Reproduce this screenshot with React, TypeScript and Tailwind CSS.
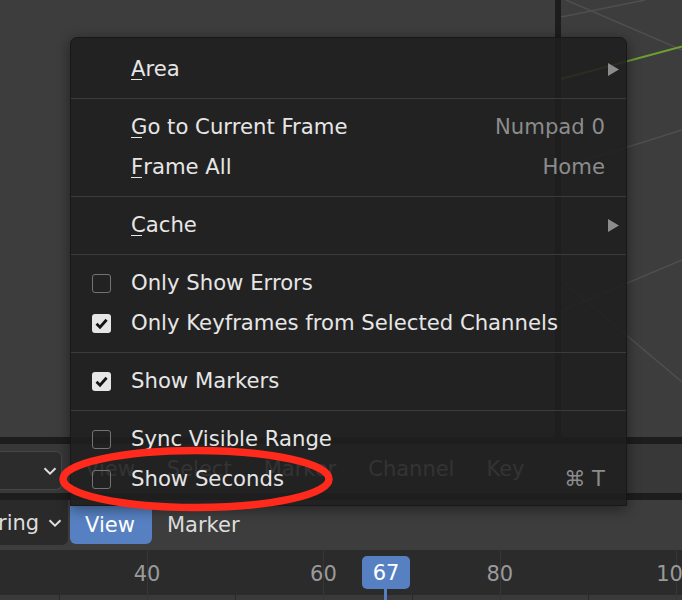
import React from 'react';

type Check = 'on' | 'off';

function Mnemonic({ first, rest }: { first: string; rest: string }) {
  return (
    <span>
      <span className="relative">
        {first}
        <span className="absolute bottom-[1px] left-0 h-px w-[11px] bg-[#e6e6e6]" />
      </span>
      {rest}
    </span>
  );
}

function Row({
  children,
  check,
  shortcut,
  submenu,
}: {
  children: React.ReactNode;
  check?: Check;
  shortcut?: string;
  submenu?: boolean;
}) {
  return (
    <div className="flex h-[40px] items-center pl-[21px] pr-[21px] pt-[2px]">
      <div className="mr-[20px] flex w-[19px] justify-center">
        {check === 'off' && (
          <div className="h-[19px] w-[19px] rounded-[3px] border-[1.5px] border-[#727272]" />
        )}
        {check === 'on' && (
          <div className="flex h-[19px] w-[19px] items-center justify-center rounded-[3px] bg-[#e6e6e6]">
            <svg width="19" height="19" viewBox="0 0 19 19">
              <path d="M4.5 9.8 L8 13.2 L14.6 5.8" fill="none" stroke="#141414" strokeWidth="2.8" />
            </svg>
          </div>
        )}
      </div>
      <span className="flex-1 text-[#e6e6e6]">{children}</span>
      {shortcut && <span className="text-[#8c8c8c]">{shortcut}</span>}
      {submenu && (
        <svg className="-mr-[14px]" width="11" height="13" viewBox="0 0 11 13">
          <polygon points="0,0 11,6.5 0,13" fill="#8c8c8c" />
        </svg>
      )}
    </div>
  );
}

function Sep() {
  return <div className="mb-[7px] mt-[10px] h-px bg-[#3b3b3b]" />;
}

function Chevron() {
  return (
    <svg width="14" height="8" viewBox="0 0 14 8">
      <path d="M1.5 1.2 L7 6.6 L12.5 1.2" fill="none" stroke="#dedede" strokeWidth="2" />
    </svg>
  );
}

const frameX = (f: number) => 147 + (f - 40) * 8.82;

function Ruler() {
  const frames = [30, 40, 50, 60, 70, 80, 90, 100];
  return (
    <div className="relative h-[50px] bg-[#2b2b2b]">
      <div className="absolute bottom-0 left-0 h-[5px] w-full bg-[#3a3a3a]" />
      {frames.map((f) =>
        f % 20 === 0 ? (
          <div key={f} className="absolute top-0 h-[50px] w-px bg-[#363636]" style={{ left: frameX(f) }} />
        ) : (
          <div key={f} className="absolute bottom-0 h-[5px] w-px bg-[#2a2a2a]" style={{ left: frameX(f) }} />
        )
      )}
      {[40, 60, 80, 100].map((f) => (
        <span
          key={f}
          className="absolute top-[11.5px] w-[60px] text-center text-[#9a9a9a]"
          style={{ left: frameX(f) - 30 }}
        >
          {f}
        </span>
      ))}
      <div className="absolute left-[362px] top-[6px] flex h-[33px] w-[48px] items-center justify-center rounded-[5px] bg-[#5680c2] text-white">
        67
      </div>
      <div className="absolute left-[384px] top-[39px] h-[11px] w-[3px] bg-[#5680c2]" />
    </div>
  );
}

export default function App() {
  return (
    <div className="relative h-[600px] w-[682px] overflow-hidden bg-[#1d1d1d] font-['DejaVu_Sans','Liberation_Sans',sans-serif] text-[21px] leading-[24px]">
      {/* upper editors */}
      <div className="flex h-[437px]">
        <div className="w-[555px] rounded-br-[4px] bg-[#3d3d3d]" />
        <div className="ml-[6px] flex-1 rounded-bl-[4px] bg-[#3d3d3d]">
          <svg width="121" height="437" viewBox="0 0 121 437">
            <g stroke="#4f4f4f" strokeWidth="1.5">
              <line x1="0" y1="17" x2="84" y2="0" />
              <line x1="5" y1="0" x2="121" y2="50" />
              <line x1="0" y1="168" x2="121" y2="130" />
              <line x1="0" y1="311" x2="121" y2="260" />
              <line x1="0" y1="280" x2="121" y2="382" />
            </g>
            <line x1="0" y1="79" x2="121" y2="46.5" stroke="#6d9f31" strokeWidth="2" />
          </svg>
        </div>
      </div>

      {/* dope sheet header */}
      <div className="mt-[7px] flex h-[49px] items-start bg-[#383838]">
        <div className="mt-[7px] flex h-[39px] w-[62px] items-center justify-end rounded-r-[6px] border border-l-0 border-[#474747] bg-[#2c2c2c] pr-[4px]">
          <Chevron />
        </div>
        <div className="ml-[23px] flex h-[49px] items-center gap-[32px] text-[#c2c2c2]">
          <span>View</span>
          <span>Select</span>
          <span>Marker</span>
          <span>Channel</span>
          <span>Key</span>
        </div>
      </div>

      {/* timeline header */}
      <div className="mt-[7px] flex h-[50px] items-start bg-[#3d3d3d]">
        <div className="flex h-[45px] w-[68px] items-center justify-between rounded-br-[6px] bg-[#2a2a2a] pr-[6px]">
          <span className="-ml-[2px] text-[#dedede]">ring</span>
          <Chevron />
        </div>
        <div className="ml-[2px] mt-[6px] flex h-[38px] w-[82px] items-center rounded-b-[6px] bg-[#5680c2] pl-[15px] text-white">
          View
        </div>
        <div className="ml-[15px] flex h-[50px] items-center text-[#dedede]">Marker</div>
      </div>

      <Ruler />

      {/* View menu */}
      <div className="absolute left-[70px] top-[37px] w-[557px] rounded-t-[7px] border border-[#181818] bg-[rgba(31,31,31,0.88)] pb-[7px] pt-[10px] text-[21.2px] shadow-[0_3px_14px_rgba(0,0,0,0.45)]">
        <Row submenu>
          <Mnemonic first="A" rest="rea" />
        </Row>
        <Sep />
        <Row shortcut="Numpad 0">
          <Mnemonic first="G" rest="o to Current Frame" />
        </Row>
        <Row shortcut="Home">
          <Mnemonic first="F" rest="rame All" />
        </Row>
        <Sep />
        <Row submenu>
          <Mnemonic first="C" rest="ache" />
        </Row>
        <Sep />
        <Row check="off">Only Show Errors</Row>
        <Row check="on">Only Keyframes from Selected Channels</Row>
        <Sep />
        <Row check="on">Show Markers</Row>
        <Sep />
        <Row check="off">Sync Visible Range</Row>
        <Row check="off" shortcut="⌘ T">
          Show Seconds
        </Row>
      </div>

      {/* annotation */}
      <svg className="pointer-events-none absolute left-0 top-0" width="682" height="600">
        <ellipse cx="196" cy="479" rx="133" ry="28.5" fill="none" stroke="#ff2a1c" strokeWidth="7.5" />
      </svg>
    </div>
  );
}
